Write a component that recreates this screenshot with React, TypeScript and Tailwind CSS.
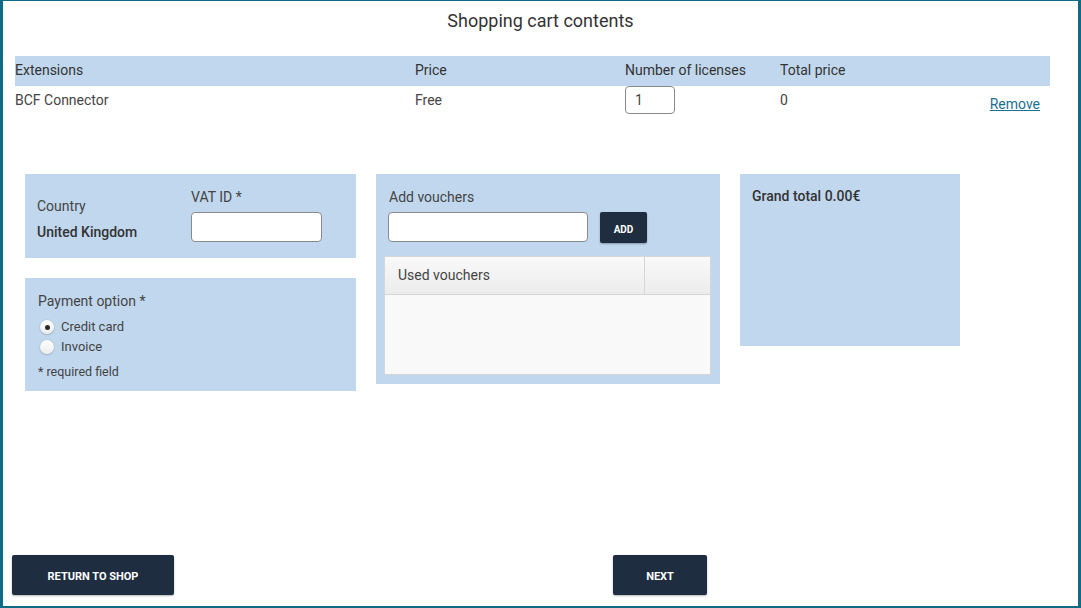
import React from 'react';

function Radio({ checked, label }: { checked?: boolean; label: string }) {
  return (
    <div className="flex items-center h-[20px]">
      <span className="ml-[2px] w-[14px] h-[14px] rounded-full bg-gradient-to-b from-white to-[#ececec] shadow-[0_0_1px_rgba(0,0,0,0.35),0_1px_2px_rgba(0,0,0,0.15)] flex items-center justify-center">
        {checked && <span className="w-[5px] h-[5px] rounded-full bg-[#2b2b2b]" />}
      </span>
      <span className="ml-[7px] text-[13px] text-[#444]">{label}</span>
    </div>
  );
}

export default function App() {
  return (
    <div
      className="w-[1081px] h-[608px] box-border border-l-[3px] border-t border-r-[3px] border-b-2 border-[#0f6a86] bg-white flex flex-col text-[#333]"
      style={{ fontFamily: 'Roboto, "Liberation Sans", sans-serif' }}
    >
      {/* Title */}
      <div className="h-[55px] pt-[8px] text-center text-[18px] leading-[24px] text-[#333]">
        Shopping cart contents
      </div>

      {/* Cart table */}
      <div className="ml-[12px] w-[1035px] text-[14px]">
        <div className="flex items-center h-[30px] pb-[2px] bg-[#c1d7ee] text-[#333]">
          <div className="w-[400px]">Extensions</div>
          <div className="w-[210px]">Price</div>
          <div className="w-[155px]">Number of licenses</div>
          <div>Total price</div>
        </div>
        <div className="flex items-start h-[30px] text-[#444] leading-[28px]">
          <div className="w-[400px]">BCF Connector</div>
          <div className="w-[210px]">Free</div>
          <div className="w-[155px]">
            <div className="w-[50px] h-[28px] border border-[#8a8a8a] rounded-[4px] flex items-center pl-[9px] text-[14px] text-[#444] bg-white">
              1
            </div>
          </div>
          <div className="flex-1">0</div>
          <a className="mr-[10px] mt-[4px] text-[#1b6f90] underline text-[14px]" href="#">
            Remove
          </a>
        </div>
      </div>

      {/* Panels */}
      <div className="ml-[22px] mt-[58px] flex items-start gap-[20px]">
        <div className="w-[331px] flex flex-col gap-[20px]">
          <div className="h-[84px] bg-[#c1d7ee] pl-[12px] flex">
            <div className="w-[154px] pt-[22px]">
              <div className="leading-[20px] text-[14px] text-[#444]">Country</div>
              <div className="mt-[6px] leading-[20px] text-[14px] font-medium text-[#333]">United Kingdom</div>
            </div>
            <div className="pt-[13px]">
              <div className="leading-[20px] text-[14px] text-[#444]">VAT ID *</div>
              <div className="mt-[5px] w-[131px] h-[30px] bg-white border border-[#8a8a8a] rounded-[4px]" />
            </div>
          </div>
          <div className="h-[113px] bg-[#c1d7ee] pl-[13px] pt-[13px]">
            <div className="leading-[20px] text-[14px] text-[#444]">Payment option *</div>
            <div className="mt-[6px]">
              <Radio checked label="Credit card" />
              <Radio label="Invoice" />
            </div>
            <div className="mt-[5px] leading-[20px] text-[12.5px] text-[#444]">* required field</div>
          </div>
        </div>

        <div className="w-[344px] h-[210px] bg-[#c1d7ee] pt-[13px] px-[8px]">
          <div className="pl-[5px] leading-[20px] text-[14px] text-[#444]">Add vouchers</div>
          <div className="mt-[5px] pl-[4px] flex items-start">
            <div className="w-[200px] h-[30px] bg-white border border-[#8a8a8a] rounded-[4px]" />
            <button className="ml-[12px] w-[47px] h-[31px] pt-[3px] bg-[#1e2d3f] text-white text-[10px] font-bold rounded-[2px] shadow-[0_1px_2px_rgba(0,0,0,0.3)]">
              ADD
            </button>
          </div>
          <div className="mt-[13px] w-[327px] h-[119px] border border-[#d6d6d6] bg-[#f9f9f9] flex flex-col">
            <div className="h-[38px] flex border-b border-[#d6d6d6] bg-gradient-to-b from-[#f9f9f9] to-[#ececec]">
              <div className="w-[260px] border-r border-[#d6d6d6] pl-[13px] flex items-center text-[14px] text-[#444]">
                Used vouchers
              </div>
              <div className="flex-1" />
            </div>
          </div>
        </div>

        <div className="w-[220px] h-[172px] bg-[#c1d7ee] pl-[12px] pt-[12px]">
          <div className="leading-[20px] text-[14px] font-medium text-[#333]">Grand total 0.00€</div>
        </div>
      </div>

      {/* Footer buttons */}
      <div className="mt-auto pl-[9px] pb-[11px] flex">
        <button className="w-[162px] h-[40px] pt-[5px] bg-[#1e2d3f] text-white text-[11px] font-bold rounded-[2px] shadow-[0_1px_2px_rgba(0,0,0,0.3)]">
          RETURN TO SHOP
        </button>
        <button className="ml-[439px] w-[94px] h-[40px] pt-[5px] bg-[#1e2d3f] text-white text-[11px] font-bold rounded-[2px] shadow-[0_1px_2px_rgba(0,0,0,0.3)]">
          NEXT
        </button>
      </div>
    </div>
  );
}
